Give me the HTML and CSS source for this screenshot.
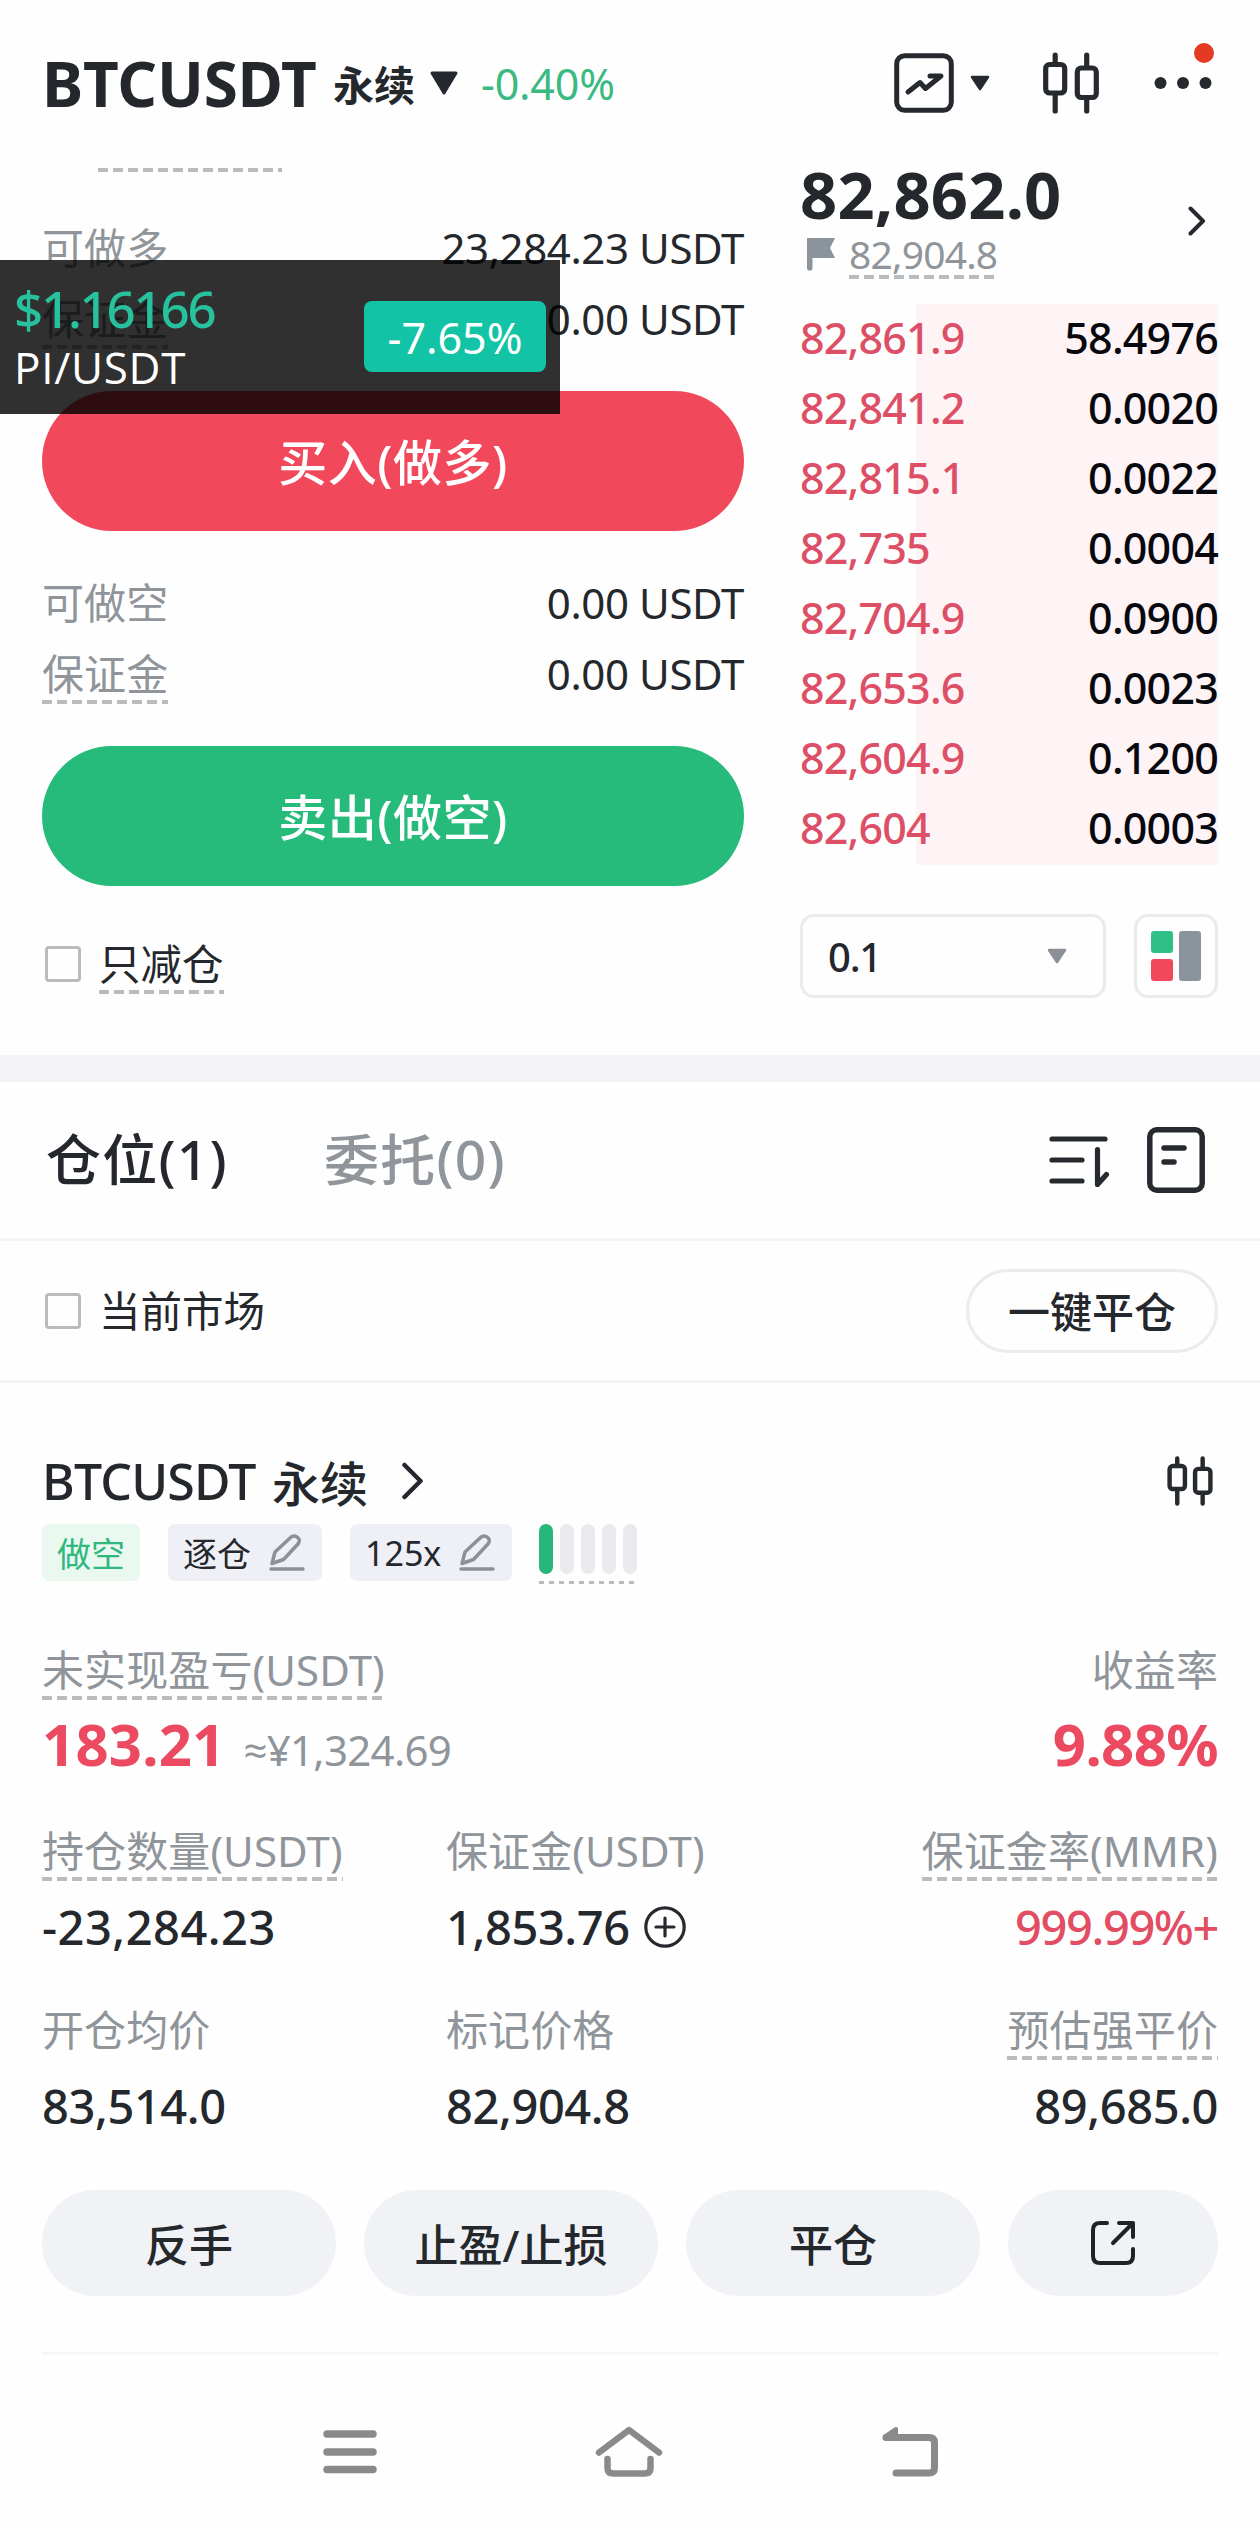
FILE: index.html
```html
<!DOCTYPE html>
<html lang="zh-CN">
<head>
    <meta charset="UTF-8">
    <title>BTCUSDT 永续</title>
    <link rel="stylesheet" href="styles.css">
</head>
<body>
    <header class="header">
        <h1 class="symbol">BTCUSDT</h1>
        <span class="symbol-type">永续</span>
        <svg class="symbol-caret" width="30" height="25" viewBox="0 0 30 25"><path d="M3 2h24L15 22z" fill="#24272e" stroke="#24272e" stroke-width="3" stroke-linejoin="round"/></svg>
        <span class="change">-0.40%</span>
        <div class="header-icons">
            <svg width="60" height="60" viewBox="0 0 60 60" fill="none" stroke="#262a2f" stroke-width="5" stroke-linecap="round" stroke-linejoin="round"><rect x="2.700" y="2.700" width="54.600" height="54.600" rx="8"/><path d="M14 39l12-9.500 5.500 6L47 23H36"/></svg>
            <svg class="chart-caret" width="20" height="17" viewBox="0 0 20 17"><path d="M2 2h16l-8 12z" fill="#262a2f" stroke="#262a2f" stroke-width="2.500" stroke-linejoin="round"/></svg>
            <svg class="candles" width="56" height="62" viewBox="0 0 56 62" fill="none" stroke="#262a2f" stroke-width="5.200" stroke-linecap="round"><rect x="2.700" y="12.500" width="19" height="28.500" rx="4"/><path d="M12.200 3v9M12.200 42v17"/><rect x="34.300" y="16" width="19" height="29.500" rx="4"/><path d="M43.700 3v12M43.700 46v13"/></svg>
            <div class="more">
                <svg width="58" height="14" viewBox="0 0 58 14" fill="#262a2f"><circle cx="6.500" cy="7" r="6"/><circle cx="29" cy="7" r="6"/><circle cx="51.500" cy="7" r="6"/></svg>
                <span class="more-dot"></span>
            </div>
        </div>
    </header>

    <main>
        <div class="trade">
            <div class="order">
                <div class="order-cut dashed"></div>
                <div class="row"><span class="label">可做多</span><span class="amount">23,284.23 USDT</span></div>
                <div class="row"><span class="label dashed">保证金</span><span class="amount">0.00 USDT</span></div>
                <div class="order-btn buy">买入(做多)</div>
                <div class="row"><span class="label">可做空</span><span class="amount">0.00 USDT</span></div>
                <div class="row"><span class="label dashed">保证金</span><span class="amount">0.00 USDT</span></div>
                <div class="order-btn sell">卖出(做空)</div>
                <div class="check reduce"><span class="box"></span><span class="check-text dashed">只减仓</span></div>
            </div>

            <div class="book">
                <div class="ticker">
                    <div>
                        <div class="last">82,862.0</div>
                        <div class="mark">
                            <svg width="28" height="34" viewBox="0 0 28 34"><path d="M0 1h28l-5 10 5 10H5.500v10a2.700 2.700 0 0 1-5.500 0z" fill="#8b939b"/></svg>
                            <span class="mark-price dashed">82,904.8</span>
                        </div>
                    </div>
                    <svg class="ticker-arrow" width="18" height="30" viewBox="0 0 18 30" fill="none" stroke="#262a2f" stroke-width="4" stroke-linecap="round" stroke-linejoin="round"><path d="M2.500 2.500L15 15 2.500 27.500"/></svg>
                </div>
                <div class="asks">
                    <div class="ask"><span class="price">82,861.9</span><span>58.4976</span></div>
                    <div class="ask"><span class="price">82,841.2</span><span>0.0020</span></div>
                    <div class="ask"><span class="price">82,815.1</span><span>0.0022</span></div>
                    <div class="ask"><span class="price">82,735</span><span>0.0004</span></div>
                    <div class="ask"><span class="price">82,704.9</span><span>0.0900</span></div>
                    <div class="ask"><span class="price">82,653.6</span><span>0.0023</span></div>
                    <div class="ask"><span class="price">82,604.9</span><span>0.1200</span></div>
                    <div class="ask"><span class="price">82,604</span><span>0.0003</span></div>
                </div>
                <div class="book-tools">
                    <div class="step">
                        <span>0.1</span>
                        <svg width="20" height="17" viewBox="0 0 20 17"><path d="M2 2h16l-8 12z" fill="#8b9096" stroke="#8b9096" stroke-width="2.500" stroke-linejoin="round"/></svg>
                    </div>
                    <div class="depth-mode">
                        <svg width="50" height="50" viewBox="0 0 50 50"><rect width="22" height="22" rx="3" fill="#2fc08a"/><rect y="28" width="22" height="22" rx="3" fill="#f1485b"/><rect x="28" width="22" height="50" rx="3" fill="#8b939c"/></svg>
                    </div>
                </div>
            </div>
        </div>

        <div class="tabs">
            <span class="tab active">仓位(1)</span>
            <span class="tab">委托(0)</span>
            <div class="tab-icons">
                <svg width="62" height="66" viewBox="0 0 62 66" fill="none" stroke="#262a2f" stroke-width="5.200" stroke-linecap="round" stroke-linejoin="round"><path d="M3 12h53M3 33h30M3 54h30M48.500 22.500v35l9-10"/></svg>
                <svg width="58" height="66" viewBox="0 0 58 66" fill="none" stroke="#262a2f" stroke-width="5.500" stroke-linecap="round"><rect x="2.800" y="2.800" width="52.400" height="60.400" rx="7"/><path d="M17 21h20M17 35h10"/></svg>
            </div>
        </div>

        <div class="filter">
            <div class="check"><span class="box"></span><span class="check-text">当前市场</span></div>
            <div class="close-all">一键平仓</div>
        </div>

        <section class="position">
            <div class="position-head">
                <h2 class="position-name">BTCUSDT</h2>
                <span class="position-type">永续</span>
                <svg width="24" height="38" viewBox="0 0 24 38" fill="none" stroke="#24272e" stroke-width="4.500" stroke-linecap="round" stroke-linejoin="round"><path d="M3.500 3L19.500 19 3.500 35"/></svg>
                <svg class="position-candles" width="46" height="50" viewBox="0 0 56 62" fill="none" stroke="#262a2f" stroke-width="5.500" stroke-linecap="round"><rect x="2.700" y="12.500" width="19" height="28.500" rx="4"/><path d="M12.200 3v9M12.200 42v17"/><rect x="34.300" y="16" width="19" height="29.500" rx="4"/><path d="M43.700 3v12M43.700 46v13"/></svg>
            </div>

            <div class="tags">
                <span class="tag short">做空</span>
                <span class="tag">逐仓
                    <svg width="36" height="38" viewBox="0 0 36 38" fill="none" stroke="#8c9197" stroke-width="3.500" stroke-linecap="round" stroke-linejoin="round"><path d="M2 35h32"/><path d="M20.500 4.500q3.500-4 7.500-1.500t1 7L14.500 25.500 3 29.500 6 18z"/></svg>
                </span>
                <span class="tag">125x
                    <svg width="36" height="38" viewBox="0 0 36 38" fill="none" stroke="#8c9197" stroke-width="3.500" stroke-linecap="round" stroke-linejoin="round"><path d="M2 35h32"/><path d="M20.500 4.500q3.500-4 7.500-1.500t1 7L14.500 25.500 3 29.500 6 18z"/></svg>
                </span>
                <div class="risk"><i class="on"></i><i></i><i></i><i></i><i></i></div>
            </div>

            <div class="pnl">
                <div class="stat">
                    <span class="label dashed">未实现盈亏(USDT)</span>
                    <div class="value big">183.21<span class="fiat"><span class="approx">≈</span>¥1,324.69</span></div>
                </div>
                <div class="stat right">
                    <span class="label">收益率</span>
                    <div class="value big">9.88%</div>
                </div>
            </div>

            <div class="stats">
                <div class="stat">
                    <span class="label dashed">持仓数量(USDT)</span>
                    <div class="value minus">-23,284.23</div>
                </div>
                <div class="stat">
                    <span class="label">保证金(USDT)</span>
                    <div class="value">1,853.76
                        <svg width="42" height="42" viewBox="0 0 42 42" fill="none" stroke="#262a2f" stroke-width="3.200" stroke-linecap="round"><circle cx="21" cy="21" r="19.200"/><path d="M12 21h18M21 12v18"/></svg>
                    </div>
                </div>
                <div class="stat right">
                    <span class="label dashed">保证金率(MMR)</span>
                    <div class="value red">999.99%+</div>
                </div>
                <div class="stat">
                    <span class="label">开仓均价</span>
                    <div class="value">83,514.0</div>
                </div>
                <div class="stat">
                    <span class="label">标记价格</span>
                    <div class="value">82,904.8</div>
                </div>
                <div class="stat right">
                    <span class="label dashed">预估强平价</span>
                    <div class="value">89,685.0</div>
                </div>
            </div>

            <div class="actions">
                <div class="action">反手</div>
                <div class="action">止盈/止损</div>
                <div class="action">平仓</div>
                <div class="action">
                    <svg width="46" height="46" viewBox="0 0 46 46" fill="none" stroke="#1f2226" stroke-width="4" stroke-linecap="round" stroke-linejoin="round"><path d="M17 3h-7q-7 0-7 7v26q0 7 7 7h26q7 0 7-7v-7M29 3h14v14M42 4L23 23"/></svg>
                </div>
            </div>
        </section>
    </main>

    <nav class="nav">
        <svg width="54" height="44" viewBox="0 0 54 44" stroke="#8a8a8a" stroke-width="7.500" stroke-linecap="round"><path d="M4 4h46M4 22h46M4 39.500h46"/></svg>
        <svg width="68" height="52" viewBox="0 0 68 52" fill="none" stroke="#8a8a8a" stroke-width="6.500" stroke-linecap="round" stroke-linejoin="round"><path d="M4 26.500L34 4l30 22.500M12.500 33v9q0 5.500 6 5.500h31q6 0 6-5.500v-9"/></svg>
        <svg width="58" height="52" viewBox="0 0 58 52" fill="none" stroke="#8a8a8a" stroke-width="7" stroke-linecap="round" stroke-linejoin="round"><path d="M5 11.500h43q5.500 0 5.500 5v25.500q0 5-5.500 5H15"/><path d="M4 10.500L15 3v8z" stroke-width="4" fill="#8a8a8a"/></svg>
    </nav>

    <!-- floating quote window -->
    <div class="float-quote">
        <div>
            <div class="float-price">$1.16166</div>
            <div class="float-name">PI/USDT</div>
        </div>
        <span class="float-change">-7.65%</span>
    </div>
</body>
</html>
```
FILE: styles.css
```css
:root {
    --text: #24272c;
    --gray: #8f959a;
    --red: #f1485b;
    --green: #26ba7b;
    --line: #f3f4f5;
    --border: #e9ebed;
}
* {
    box-sizing: border-box;
}
body {
    margin: 0;
    position: relative;
    width: 1260px;
    height: 2524px;
    overflow: hidden;
    background: #fefefe;
    color: var(--text);
    font-family: "Noto Sans", "Noto Sans CJK SC", sans-serif;
    font-size: 42px;
}
h1, h2 {
    margin: 0;
}
svg {
    flex: none;
    display: block;
}
.dashed {
    background: repeating-linear-gradient(to right, #b9bcbe 0 10px, transparent 10px 15px) left bottom / 100% 4px no-repeat;
}

/* header */
.header {
    display: flex;
    align-items: center;
    height: 166px;
    padding: 0 49px 0 42px;
    white-space: nowrap;
}
.symbol {
    width: 291px;
    font-size: 62px;
    font-weight: 700;
    letter-spacing: -0.2px;
}
.symbol-type {
    width: 96px;
    font-size: 41px;
    font-weight: 700;
}
.symbol-caret {
    margin-right: 22px;
}
.change {
    font-size: 43px;
    letter-spacing: -0.2px;
    color: #3bb983;
}
.header-icons {
    display: flex;
    align-items: center;
    margin-left: auto;
}
.chart-caret {
    margin-left: 16px;
}
.candles {
    margin-left: 53px;
}
.more {
    position: relative;
    margin: 0 -1px 0 55px;
}
.more-dot {
    position: absolute;
    top: -33px;
    right: -2px;
    width: 20px;
    height: 20px;
    border-radius: 50%;
    background: #e53a22;
}

/* order form + book */
.trade {
    display: flex;
    justify-content: space-between;
    height: 916px;
    padding: 0 42px;
    border-bottom: 27px solid #f3f3f5;
}
.order {
    width: 702px;
}
.order-cut {
    width: 184px;
    height: 4px;
    margin: 2px 0 40px 56px;
}
.row {
    display: flex;
    align-items: center;
    justify-content: space-between;
    height: 71px;
}
.label {
    letter-spacing: 0.1px;
    line-height: 60px;
    color: var(--gray);
    white-space: nowrap;
}
.amount {
    letter-spacing: -0.4px;
}
.order-btn {
    height: 140px;
    margin: 37px 0 36px;
    border-radius: 70px;
    color: #fff;
    font-size: 49px;
    font-weight: 500;
    letter-spacing: 0.5px;
    line-height: 142px;
    text-align: center;
}
.buy {
    background: var(--red);
}
.sell {
    background: var(--green);
}
.check {
    display: flex;
    align-items: center;
    height: 71px;
    padding-left: 3px;
}
.reduce {
    margin-top: 42px;
}
.box {
    width: 36px;
    height: 36px;
    margin-right: 18px;
    border: 3px solid #b9bcbe;
    border-radius: 4px;
}
.check-text {
    font-size: 41.5px;
    line-height: 60px;
}

.book {
    width: 418px;
}
.ticker {
    display: flex;
    align-items: center;
    justify-content: space-between;
    height: 138px;
    padding: 0 12px 23px 0;
}
.last {
    height: 60px;
    font-size: 65px;
    font-weight: 700;
    letter-spacing: 0.2px;
    line-height: 56px;
}
.mark {
    display: flex;
    align-items: center;
    height: 55px;
    padding-left: 7px;
    gap: 14px;
}
.mark-price {
    font-size: 39px;
    line-height: 50px;
    letter-spacing: -0.8px;
    color: var(--gray);
}
.ticker-arrow {
    margin-top: -5px;
}
.asks {
    height: 561px;
    background: linear-gradient(#fef3f5, #fef3f5) right / 302px 100% no-repeat;
}
.ask {
    display: flex;
    justify-content: space-between;
    height: 70px;
    font-size: 43px;
    font-weight: 500;
    letter-spacing: -0.8px;
    line-height: 68px;
    color: #08080f;
}
.price {
    color: #dd4f66;
}
.book-tools {
    display: flex;
    justify-content: space-between;
    margin-top: 49px;
}
.step, .depth-mode {
    display: flex;
    align-items: center;
    height: 84px;
    border: 3px solid var(--border);
    border-radius: 14px;
}
.step {
    justify-content: space-between;
    width: 306px;
    padding: 0 36px 0 25px;
    font-size: 40px;
    font-weight: 500;
    letter-spacing: -1.2px;
}
.depth-mode {
    justify-content: center;
    width: 84px;
}

/* tabs */
.tabs {
    display: flex;
    align-items: center;
    height: 159px;
    padding: 0 55px 0 46px;
    border-bottom: 3px solid var(--line);
}
.tab {
    width: 278px;
    padding-bottom: 8px;
    font-size: 55px;
    font-weight: 500;
    letter-spacing: 1.2px;
    color: var(--gray);
}
.tab.active {
    color: var(--text);
}
.tab-icons {
    display: flex;
    gap: 36px;
    margin-left: auto;
}
.filter {
    display: flex;
    align-items: center;
    justify-content: space-between;
    height: 142px;
    padding: 0 42px;
    border-bottom: 3px solid var(--line);
}
.close-all {
    width: 252px;
    height: 84px;
    border: 3px solid var(--border);
    border-radius: 42px;
    font-size: 42px;
    font-weight: 500;
    line-height: 80px;
    text-align: center;
}

/* position card */
.position {
    margin: 0 42px;
    padding: 69px 0 56px;
    border-bottom: 3px solid #f6f7f8;
}
.position-head {
    display: flex;
    align-items: center;
    height: 58px;
}
.position-name {
    width: 230px;
    font-size: 50px;
    font-weight: 500;
    letter-spacing: -0.8px;
}
.position-type {
    width: 129px;
    font-size: 48px;
    font-weight: 500;
}
.position-candles {
    margin: 0 5px 0 auto;
}
.tags {
    display: flex;
    height: 60px;
    margin-top: 14px;
    gap: 28px;
}
.tag {
    display: flex;
    align-items: center;
    gap: 18px;
    height: 57px;
    padding: 0 17px 0 15px;
    border-radius: 7px;
    background: #eff0f5;
    font-size: 34px;
}
.tag.short {
    padding: 0 15px;
    background: #e9f9f0;
    color: #30b87e;
}
.risk {
    display: flex;
    gap: 7px;
    margin-left: -1px;
    padding-bottom: 11px;
    background: repeating-linear-gradient(to right, #b9bcbe 0 5px, transparent 5px 10px) left bottom / 100% 3px no-repeat;
}
.risk i {
    width: 14px;
    height: 50px;
    border-radius: 7px;
    background: #e9eaed;
}
.risk .on {
    background: #27b77b;
}
.pnl {
    display: flex;
    justify-content: space-between;
    margin-top: 56px;
}
.stats {
    display: grid;
    grid-template-columns: 404px 300px 1fr;
    row-gap: 43px;
    margin-top: 45px;
}
.stat {
    display: flex;
    flex-direction: column;
    align-items: flex-start;
    gap: 16px;
}
.stat.right {
    align-items: flex-end;
}
.value {
    display: flex;
    align-items: center;
    gap: 14px;
    height: 60px;
    font-size: 47px;
    font-weight: 500;
    letter-spacing: -0.4px;
    line-height: 60px;
    white-space: nowrap;
}
.value.minus {
    letter-spacing: 0.5px;
}
.value.red {
    color: #e14d63;
    letter-spacing: -1.4px;
}
.value.big {
    align-items: baseline;
    gap: 18px;
    font-size: 58px;
    font-weight: 700;
    letter-spacing: 0.2px;
    line-height: 56px;
    color: #eb4a61;
}
.fiat {
    font-size: 42px;
    font-weight: 400;
    letter-spacing: -0.7px;
    color: var(--gray);
}
.approx {
    font-family: "Open Sans", sans-serif;
}
.right .big {
    letter-spacing: -0.6px;
}
.actions {
    display: grid;
    grid-template-columns: 294px 294px 294px 210px;
    gap: 28px;
    margin-top: 54px;
}
.action {
    display: flex;
    align-items: center;
    justify-content: center;
    height: 106px;
    border-radius: 53px;
    background: #f0f2f6;
    font-size: 44px;
    font-weight: 500;
}

.nav {
    display: flex;
    align-items: center;
    justify-content: space-between;
    height: 169px;
    padding: 24px 321px 0 323px;
}

.float-quote {
    position: absolute;
    top: 260px;
    left: 0;
    display: flex;
    justify-content: space-between;
    width: 560px;
    height: 154px;
    padding: 18px 14px 0 14px;
    background: rgba(0, 0, 0, 0.81);
}
.float-price {
    height: 62px;
    color: #27c29d;
    font-size: 51px;
    font-weight: 500;
    letter-spacing: -2.2px;
    line-height: 60px;
}
.float-name {
    color: #fff;
    font-family: "Open Sans", sans-serif;
    font-size: 44px;
    letter-spacing: 0.7px;
    line-height: 54px;
}
.float-change {
    width: 182px;
    height: 71px;
    margin-top: 23px;
    border-radius: 8px;
    background: #13c3a6;
    color: #fff;
    font-size: 43px;
    line-height: 73px;
    text-align: center;
}
```
